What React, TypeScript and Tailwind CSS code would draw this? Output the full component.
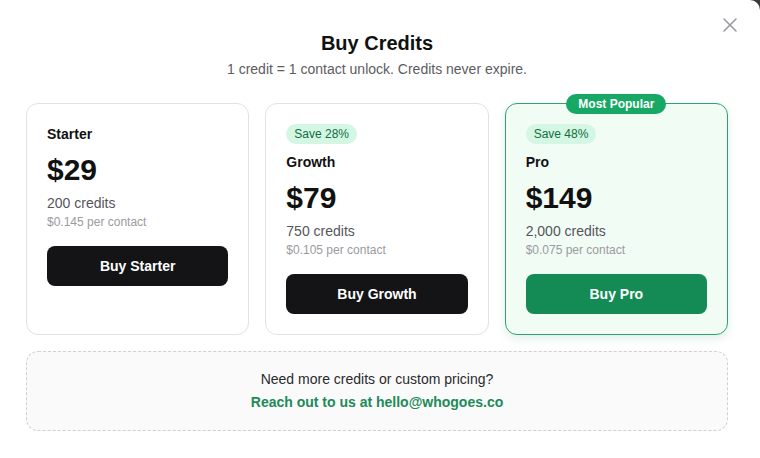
import React from "react";
import { X } from "lucide-react";

type Plan = {
  name: string;
  price: string;
  credits: string;
  per: string;
  save?: string;
  popular?: boolean;
};

const plans: Plan[] = [
  { name: "Starter", price: "$29", credits: "200 credits", per: "$0.145 per contact" },
  { name: "Growth", price: "$79", credits: "750 credits", per: "$0.105 per contact", save: "Save 28%" },
  { name: "Pro", price: "$149", credits: "2,000 credits", per: "$0.075 per contact", save: "Save 48%", popular: true },
];

function Card({ plan }: { plan: Plan }) {
  return (
    <div
      className={
        plan.popular
          ? "relative flex flex-col rounded-xl border border-[#2aa572] bg-[#f1fcf5] p-5 shadow-[0_4px_10px_rgba(16,120,70,0.12)]"
          : "relative flex flex-col rounded-xl border border-[#e2e2e5] bg-white p-5"
      }
    >
      {plan.popular && (
        <div className="absolute -top-[10px] left-1/2 -translate-x-1/2 h-5 px-3 rounded-full bg-[#17a865] text-white text-xs font-bold leading-5 whitespace-nowrap">
          Most Popular
        </div>
      )}
      {plan.save && (
        <div className="flex mb-2">
          <span className="h-5 px-2 rounded-full bg-[#d3f7e3] text-[#146c43] text-xs leading-5">
            {plan.save}
          </span>
        </div>
      )}
      <div className="text-sm font-bold leading-5 text-[#111]">{plan.name}</div>
      <div className="mt-2 text-3xl font-bold leading-9 text-[#111]">{plan.price}</div>
      <div className="mt-[5px] text-sm leading-5 text-[#55555c]">{plan.credits}</div>
      <div className="mt-[1px] text-xs leading-4 text-[#9a9aa0]">{plan.per}</div>
      <button
        className={
          plan.popular
            ? "mt-4 h-10 w-full rounded-lg bg-[#148a55] text-white text-sm font-bold"
            : "mt-4 h-10 w-full rounded-lg bg-[#141416] text-white text-sm font-bold"
        }
      >
        Buy {plan.name}
      </button>
    </div>
  );
}

export default function App() {
  return (
    <div className="w-[760px] h-[458px] bg-[#3a3a3a] font-['Liberation_Sans',Arial,sans-serif] overflow-hidden">
      <div className="relative h-full bg-white rounded-tr-[10px] pl-[26px] pr-[32px] pt-[29px]">
        <button className="absolute top-[13px] right-[18px] text-[#9b9ba1]">
          <X size={24} strokeWidth={1.6} />
        </button>
        <h1 className="text-center text-xl font-bold leading-7 text-[#111]">Buy Credits</h1>
        <p className="mt-[2px] text-center text-sm leading-5 text-[#5c5c63]">
          1 credit = 1 contact unlock. Credits never expire.
        </p>
        <div className="mt-6 grid grid-cols-3 gap-4">
          {plans.map((p) => (
            <Card key={p.name} plan={p} />
          ))}
        </div>
        <div className="mt-4 rounded-xl border border-dashed border-[#cfcfd4] bg-[#fafafa] pt-[17px] pb-[18px] text-center">
          <div className="text-sm leading-5 text-[#2a2a2e]">Need more credits or custom pricing?</div>
          <div className="mt-[3px] text-sm font-bold leading-5 text-[#1c8a59]">
            Reach out to us at hello@whogoes.co
          </div>
        </div>
      </div>
    </div>
  );
}
